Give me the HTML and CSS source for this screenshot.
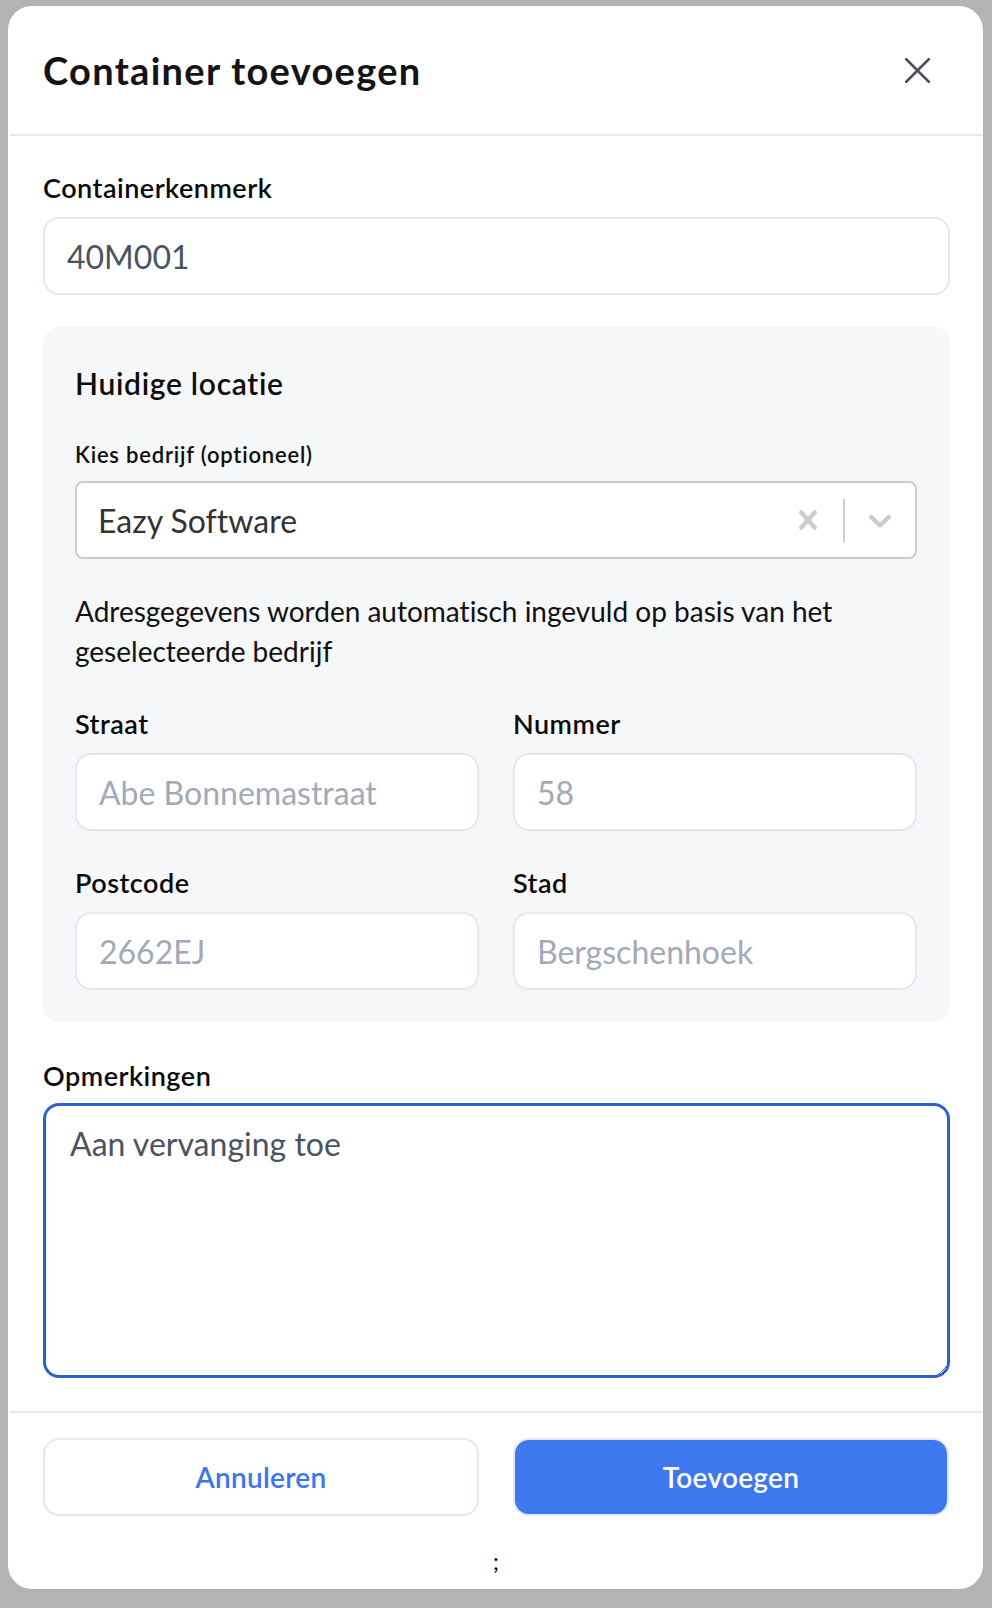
FILE: index.html
```html
<!DOCTYPE html>
<html lang="nl">
<head>
<meta charset="utf-8">
<title>Container toevoegen</title>
<link rel="stylesheet" href="styles.css">
</head>
<body>
<div class="modal">
  <header class="modal-header">
    <h1 class="modal-title">Container toevoegen</h1>
    <button class="close-btn" type="button" aria-label="Sluiten">
      <svg width="25" height="25" viewBox="0 0 25 25" aria-hidden="true">
        <path d="M1 1 L24 24 M24 1 L1 24" stroke="#4b5160" stroke-width="2.6" stroke-linecap="round" fill="none"/>
      </svg>
    </button>
  </header>

  <div class="modal-body">
    <div class="field">
      <label class="label">Containerkenmerk</label>
      <input class="input" type="text" value="40M001">
    </div>

    <section class="location">
      <h2 class="location-title">Huidige locatie</h2>
      <label class="label-small">Kies bedrijf (optioneel)</label>
      <div class="select">
        <div class="select-value">Eazy Software</div>
        <div class="select-indicators">
          <span class="indicator">
            <svg width="38" height="38" viewBox="0 0 20 20" aria-hidden="true"><path fill="#cccccc" d="M14.348 14.849c-0.469 0.469-1.229 0.469-1.697 0l-2.651-3.030-2.651 3.029c-0.469 0.469-1.229 0.469-1.697 0-0.469-0.469-0.469-1.229 0-1.697l2.758-3.15-2.759-3.152c-0.469-0.469-0.469-1.228 0-1.697s1.228-0.469 1.697 0l2.652 3.031 2.651-3.031c0.469-0.469 1.228-0.469 1.697 0s0.469 1.229 0 1.697l-2.758 3.152 2.758 3.150c0.469 0.469 0.469 1.229 0 1.698z"/></svg>
          </span>
          <span class="separator"></span>
          <span class="indicator">
            <svg width="38" height="38" viewBox="0 0 20 20" aria-hidden="true"><path fill="#cccccc" d="M4.516 7.548c0.436-0.446 1.043-0.481 1.576 0l3.908 3.747 3.908-3.747c0.533-0.481 1.141-0.446 1.574 0 0.436 0.445 0.408 1.197 0 1.615-0.406 0.418-4.695 4.502-4.695 4.502-0.217 0.223-0.502 0.335-0.787 0.335s-0.57-0.112-0.789-0.335c0 0-4.287-4.084-4.695-4.502s-0.436-1.170 0-1.615z"/></svg>
          </span>
        </div>
      </div>
      <p class="help">Adresgegevens worden automatisch ingevuld op basis van het geselecteerde bedrijf</p>
      <div class="grid">
        <div class="field">
          <label class="label">Straat</label>
          <input class="input muted" type="text" value="Abe Bonnemastraat" disabled>
        </div>
        <div class="field">
          <label class="label">Nummer</label>
          <input class="input muted" type="text" value="58" disabled>
        </div>
        <div class="field">
          <label class="label">Postcode</label>
          <input class="input muted" type="text" value="2662EJ" disabled>
        </div>
        <div class="field">
          <label class="label">Stad</label>
          <input class="input muted" type="text" value="Bergschenhoek" disabled>
        </div>
      </div>
    </section>

    <div class="field remarks">
      <label class="label">Opmerkingen</label>
      <textarea class="textarea">Aan vervanging toe</textarea>
    </div>
  </div>

  <footer class="modal-footer">
    <div class="actions">
      <button class="btn btn-secondary" type="button">Annuleren</button>
      <button class="btn btn-primary" type="button">Toevoegen</button>
    </div>
    <div class="stray">;</div>
  </footer>
</div>
</body>
</html>
```

FILE: styles.css
```css
* { box-sizing: border-box; }

html, body { height: 100%; }

body {
  margin: 0;
  padding: 6px 9px 0 8px;
  background: #b3b3b3;
  font-family: "Lato", "Noto Sans", sans-serif;
  font-variant-ligatures: none;
  color: #111111;
}

.modal {
  background: #ffffff;
  border-radius: 24px;
  height: 1583px;
  display: flex;
  flex-direction: column;
  overflow: hidden;
}

.modal-header {
  height: 130px;
  margin: 0 1px 0 2px;
  padding: 0 52px 0 33px;
  border-bottom: 2px solid #e4e8f2;
  display: flex;
  align-items: center;
  justify-content: space-between;
}

.modal-title {
  margin: 0;
  font-size: 38px;
  line-height: 44px;
  font-weight: 700;
  letter-spacing: 1.3px;
  color: #141414;
}

.close-btn {
  border: 0;
  background: none;
  padding: 0;
  width: 25px;
  height: 25px;
  display: flex;
}

.modal-body {
  padding: 35px 33px 33px 35px;
}

.field {
  display: flex;
  flex-direction: column;
  gap: 12px;
}

.label {
  font-size: 27px;
  line-height: 34px;
  font-weight: 600;
  letter-spacing: 0.5px;
  color: #0a0a0a;
}

.input {
  height: 78px;
  width: 100%;
  border: 2px solid #e3e7f1;
  border-radius: 16px;
  background: #ffffff;
  padding: 0 22px;
  font-family: inherit;
  font-variant-ligatures: none;
  font-size: 32px;
  color: #4b5363;
  outline: none;
}

.input.muted,
.input:disabled {
  color: #a2a9b8;
  -webkit-text-fill-color: #a2a9b8;
  background: #ffffff;
  opacity: 1;
}

.location {
  margin-top: 32px;
  background: #f6f7f9;
  border-radius: 16px;
  padding: 32px 33px 32px 32px;
}

.location-title {
  margin: 0;
  font-size: 30px;
  line-height: 48px;
  font-weight: 600;
  letter-spacing: 0.7px;
  color: #0d0d0d;
}

.label-small {
  display: block;
  margin-top: 33px;
  font-size: 22px;
  line-height: 30px;
  font-weight: 600;
  letter-spacing: 0.8px;
  color: #0d0d0d;
}

.select {
  margin-top: 11px;
  height: 78px;
  border: 2px solid #cccccc;
  border-radius: 8px;
  background: #ffffff;
  display: flex;
  align-items: center;
}

.select-value {
  flex: 1;
  padding-left: 21px;
  font-size: 32px;
  color: #333333;
}

.select-indicators {
  display: flex;
  align-items: center;
  align-self: stretch;
}

.indicator {
  display: flex;
  padding: 0 16px;
}

.separator {
  width: 2px;
  height: 43px;
  background: #cccccc;
}

.help {
  margin: 32px 0 0;
  font-size: 28px;
  line-height: 40px;
  color: #111111;
}

.grid {
  margin-top: 36px;
  display: grid;
  grid-template-columns: 1fr 1fr;
  column-gap: 34px;
  row-gap: 35px;
}

.remarks {
  margin-top: 37px;
  gap: 10px;
}

.textarea {
  height: 275px;
  width: 100%;
  border: 3px solid #2c60cd;
  border-radius: 16px;
  padding: 18px 24px;
  font-family: inherit;
  font-size: 32px;
  line-height: 40px;
  color: #4b5363;
  outline: none;
  resize: vertical;
}

.modal-footer {
  margin: 0 1px 0 2px;
  border-top: 2px solid #e4e8f2;
  padding: 25px 33px 0 33px;
}

.actions {
  display: grid;
  grid-template-columns: 1fr 1fr;
  column-gap: 34px;
}

.btn {
  height: 78px;
  border-radius: 16px;
  border: 2px solid #e3e7f1;
  font-family: inherit;
  font-size: 28px;
  font-weight: 600;
  letter-spacing: 0.3px;
}

.btn-secondary {
  background: #ffffff;
  color: #3b76ee;
}

.btn-primary {
  background: #3d78ef;
  color: #ffffff;
}

.stray {
  margin-top: 30px;
  text-align: center;
  font-size: 24px;
  line-height: 30px;
  color: #000000;
}
```
